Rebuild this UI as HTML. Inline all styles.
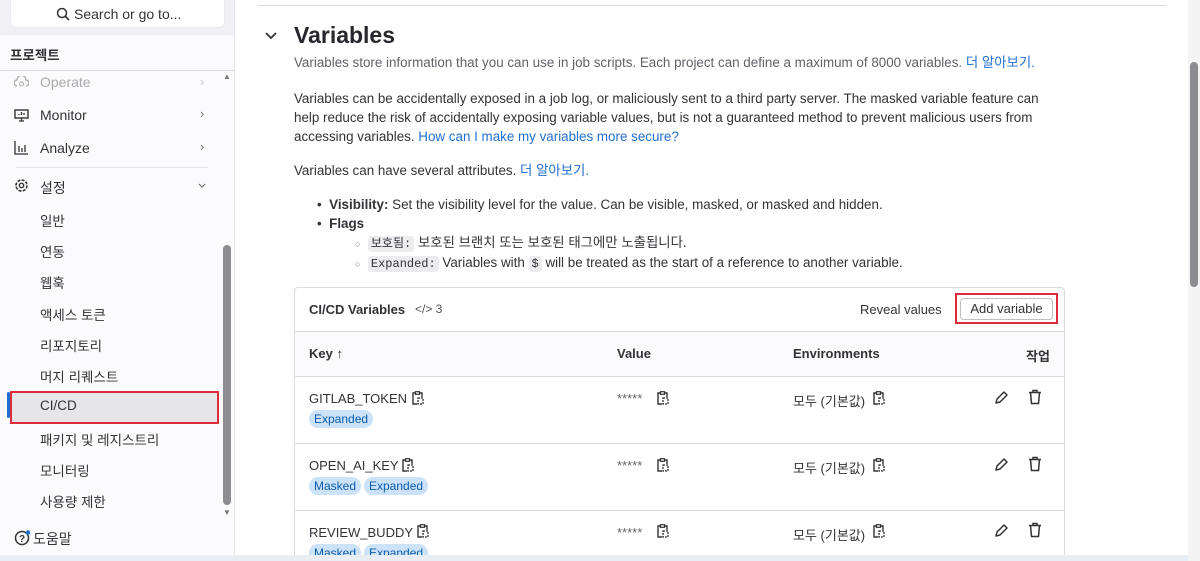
<!DOCTYPE html><html style="overflow:hidden"><head><meta charset="utf-8"><style>
*{box-sizing:border-box;margin:0;padding:0}
html,body{width:1200px;height:561px;overflow:hidden}
body{background:#fff;font-family:"Liberation Sans","Noto Sans CJK KR",sans-serif;color:#333238;font-size:14px;position:relative}
.sb{position:absolute;left:0;top:0;width:235px;height:561px;background:#fbfafd;border-right:1px solid #e4e3e8}
.abs{position:absolute;white-space:nowrap}
.it{position:absolute;left:40px;font-size:14px;color:#333238}
.sub{position:absolute;left:40px;font-size:13.5px;color:#333238}
.chev{position:absolute;left:200px;color:#737278;font-size:13px}
a{color:#1f6fd0;text-decoration:none}
code{background:#ececef;border-radius:3px;padding:1px 3px;font-family:"Liberation Mono","Noto Sans CJK KR",monospace;font-size:12px;color:#333238}
.p{position:absolute;left:294px;font-size:13.4px;line-height:19px;color:#333238}
.card{position:absolute;left:294px;top:287px;width:771px;height:274px;border:1px solid #dcdcde;border-bottom:none;border-radius:4px 4px 0 0;background:#fff;overflow:hidden}
.badge{position:absolute;background:#cbe2f9;color:#0b5cad;font-size:12px;border-radius:9px;padding:1px 5px;height:18px;line-height:16px}
.cell{position:absolute;font-size:13px;color:#333238;white-space:nowrap}
.row{position:absolute;left:0;width:100%;border-top:1px solid #dcdcde}
svg{position:absolute}
</style></head><body>
<div class="sb">
 <div class="abs" style="left:0;top:0;width:234px;height:35px;background:#f1f0f4"></div>
 <div class="abs" style="left:10px;top:0;width:215px;height:28px;background:#fff;border-radius:0 0 6px 6px;border:1px solid #ececef;border-top:none;font-size:14px;line-height:28px;color:#333238;padding-left:63px">Search or go to...</div>
 <svg style="left:56px;top:7px" width="14" height="14" viewBox="0 0 14 14"><circle cx="6" cy="6" r="4.5" fill="#fff" stroke="#333" stroke-width="1.5"/><path d="M9.5 9.5L13 13" stroke="#333" stroke-width="1.6"/></svg>
 <div class="abs" style="left:10px;top:44px;font-size:13.5px;font-weight:bold">프로젝트</div>
 <div class="abs" style="left:0;top:70px;width:234px;border-top:1px solid #dcdcde"></div>
 <div class="it" style="top:74px;color:#aaa">Operate</div><div class="chev" style="top:74px;color:#ccc">›</div>
 <svg style="left:14px;top:76px" width="15" height="13" viewBox="0 0 15 13"><path d="M3 10a3 3 0 0 1 0-6 4.5 4.5 0 0 1 9 0 3 3 0 0 1 0 6" fill="none" stroke="#aaa" stroke-width="1.3"/><circle cx="7.5" cy="8" r="2" fill="none" stroke="#aaa"/></svg>
 <div class="it" style="top:107px">Monitor</div><div class="chev" style="top:106px">›</div>
 <svg style="left:14px;top:109px" width="15" height="13" viewBox="0 0 15 13"><rect x="1" y="1" width="13" height="8" fill="none" stroke="#333" stroke-width="1.4"/><path d="M5 12h5M7.5 9v3M5 6V5M7.5 6V3M10 6V4" stroke="#333" stroke-width="1.3"/></svg>
 <div class="it" style="top:140px">Analyze</div><div class="chev" style="top:139px">›</div>
 <svg style="left:14px;top:141px" width="15" height="14" viewBox="0 0 15 14"><path d="M1 0v13h13M5 11V5M8 11V7M11 11V4" stroke="#333" stroke-width="1.3" fill="none"/></svg>
 <div class="abs" style="left:16px;top:167px;width:192px;border-top:1px solid #e4e3e8"></div>
 <div class="it" style="top:178px">설정</div>
 <svg style="left:197px;top:182px" width="10" height="8" viewBox="0 0 10 8"><path d="M2 2l3 3 3-3" fill="none" stroke="#737278" stroke-width="1.2"/></svg>
 <svg style="left:14px;top:178px" width="15" height="15" viewBox="0 0 15 15"><circle cx="7.5" cy="7.5" r="5.5" fill="none" stroke="#333" stroke-width="1.6" stroke-dasharray="3 1.3"/><circle cx="7.5" cy="7.5" r="2.2" fill="none" stroke="#333" stroke-width="1.4"/></svg>
 <div class="sub" style="top:210px">일반</div>
 <div class="sub" style="top:241px">연동</div>
 <div class="sub" style="top:272px">웹훅</div>
 <div class="sub" style="top:304px">액세스 토큰</div>
 <div class="sub" style="top:335px">리포지토리</div>
 <div class="sub" style="top:366px">머지 리퀘스트</div>
 <div class="abs" style="left:7px;top:392px;width:3px;height:26px;background:#1f6fd0;border-radius:2px"></div>
 <div class="abs" style="left:10px;top:391px;width:209px;height:33px;background:#e6e5ea;border:2px solid #dd2b3b"></div>
 <div class="sub" style="top:398px">CI/CD</div>
 <div class="sub" style="top:429px">패키지 및 레지스트리</div>
 <div class="sub" style="top:460px">모니터링</div>
 <div class="sub" style="top:491px">사용량 제한</div>
 <div class="abs" style="left:223px;top:245px;width:8px;height:260px;background:#8d8c91;border-radius:4px"></div>
 <div class="abs" style="left:223px;top:72px;font-size:8px;color:#777">▲</div>
 <div class="abs" style="left:223px;top:508px;font-size:8px;color:#777">▼</div>
 <svg style="left:14px;top:530px" width="16" height="16" viewBox="0 0 16 16"><circle cx="8" cy="8" r="6.5" fill="none" stroke="#333" stroke-width="1.5"/><text x="8" y="12" font-size="10" text-anchor="middle" font-family="Liberation Sans" font-weight="bold" fill="#333">?</text><circle cx="14" cy="2.5" r="2.3" fill="#1f75cb"/></svg>
 <div class="abs" style="left:33px;top:529px;font-size:14px">도움말</div>
</div>
<div class="abs" style="left:258px;top:5px;width:908px;border-top:1px solid #dcdcde"></div>
<div class="abs" style="left:1188px;top:0;width:12px;height:561px;background:#f4f4f4"></div>
<div class="abs" style="left:1190px;top:62px;width:8px;height:225px;background:#8d8c91;border-radius:4px"></div>
<svg style="left:264px;top:30px" width="14" height="12" viewBox="0 0 14 12"><path d="M2 3l5 5 5-5" fill="none" stroke="#333" stroke-width="1.8"/></svg>
<div class="abs" style="left:294px;top:22px;font-size:23px;font-weight:bold;color:#28272d">Variables</div>
<div class="p" style="top:53px;color:#626168">Variables store information that you can use in job scripts. Each project can define a maximum of 8000 variables. <a>더 알아보기.</a></div>
<div class="p" style="top:89px;width:766px">Variables can be accidentally exposed in a job log, or maliciously sent to a third party server. The masked variable feature can help reduce the risk of accidentally exposing variable values, but is not a guaranteed method to prevent malicious users from accessing variables. <a>How can I make my variables more secure?</a></div>
<div class="p" style="top:161px">Variables can have several attributes. <a>더 알아보기.</a></div>
<div class="p" style="top:195px;left:317px">•&nbsp;&nbsp;<b>Visibility:</b> Set the visibility level for the value. Can be visible, masked, or masked and hidden.</div>
<div class="p" style="top:214px;left:317px">•&nbsp;&nbsp;<b>Flags</b></div>
<div class="p" style="top:233px;left:355px"><span style="font-size:9px;color:#777">○</span>&nbsp; <code>보호됨:</code> 보호된 브랜치 또는 보호된 태그에만 노출됩니다.</div>
<div class="p" style="top:253px;left:355px"><span style="font-size:9px;color:#777">○</span>&nbsp; <code>Expanded:</code> Variables with <code>$</code> will be treated as the start of a reference to another variable.</div>
<div class="card">
 <div class="cell" style="left:14px;top:14px;font-weight:bold">CI/CD Variables</div>
 <div class="cell" style="left:120px;top:14px;font-size:12px;color:#535158">&lt;/&gt; 3</div>
 <div class="cell" style="left:565px;top:14px">Reveal values</div>
 <div class="abs" style="left:660px;top:5px;width:103px;height:31px;border:2px solid #dd2b3b"></div>
 <div class="abs" style="left:665px;top:10px;width:93px;height:22px;border:1px solid #bfbfc3;border-radius:4px;font-size:13px;text-align:center;line-height:20px">Add variable</div>
 <div class="row" style="top:43px;height:45px;background:#fbfafd"></div>
 <div class="cell" style="left:14px;top:58px;font-weight:bold">Key ↑</div>
 <div class="cell" style="left:322px;top:58px;font-weight:bold">Value</div>
 <div class="cell" style="left:498px;top:58px;font-weight:bold">Environments</div>
 <div class="cell" style="left:731px;top:58px;font-weight:bold">작업</div>
 <div class="row" style="top:88px"></div>
 <div class="row" style="top:155px"></div>
 <div class="row" style="top:222px"></div>
 <div class="cell" style="left:14px;top:103px">GITLAB_TOKEN</div>
 <div class="badge" style="left:14px;top:122px">Expanded</div>
 <div class="cell" style="left:14px;top:170px">OPEN_AI_KEY</div>
 <div class="badge" style="left:14px;top:189px">Masked</div><div class="badge" style="left:69px;top:189px">Expanded</div>
 <div class="cell" style="left:14px;top:237px">REVIEW_BUDDY</div>
 <div class="badge" style="left:14px;top:256px">Masked</div><div class="badge" style="left:69px;top:256px">Expanded</div>
 <div class="cell" style="left:322px;top:103px;color:#666">*****</div>
 <div class="cell" style="left:322px;top:170px;color:#666">*****</div>
 <div class="cell" style="left:322px;top:237px;color:#666">*****</div>
 <div class="cell" style="left:498px;top:103px">모두 (기본값)</div>
 <div class="cell" style="left:498px;top:170px">모두 (기본값)</div>
 <div class="cell" style="left:498px;top:237px">모두 (기본값)</div>
</div>
<svg style="left:412px;top:391px" width="12" height="14" viewBox="0 0 12 14"><path d="M3 2H1v11h4M8 2h2v4" fill="none" stroke="#333" stroke-width="1.4"/><rect x="3.5" y="0.7" width="4" height="2.6" fill="none" stroke="#333" stroke-width="1.2"/><rect x="6" y="7" width="5" height="6" fill="none" stroke="#333" stroke-width="1.3" stroke-dasharray="2 1"/></svg>
<svg style="left:657px;top:391px" width="12" height="14" viewBox="0 0 12 14"><path d="M3 2H1v11h4M8 2h2v4" fill="none" stroke="#333" stroke-width="1.4"/><rect x="3.5" y="0.7" width="4" height="2.6" fill="none" stroke="#333" stroke-width="1.2"/><rect x="6" y="7" width="5" height="6" fill="none" stroke="#333" stroke-width="1.3" stroke-dasharray="2 1"/></svg>
<svg style="left:873px;top:391px" width="12" height="14" viewBox="0 0 12 14"><path d="M3 2H1v11h4M8 2h2v4" fill="none" stroke="#333" stroke-width="1.4"/><rect x="3.5" y="0.7" width="4" height="2.6" fill="none" stroke="#333" stroke-width="1.2"/><rect x="6" y="7" width="5" height="6" fill="none" stroke="#333" stroke-width="1.3" stroke-dasharray="2 1"/></svg>
<svg style="left:402px;top:458px" width="12" height="14" viewBox="0 0 12 14"><path d="M3 2H1v11h4M8 2h2v4" fill="none" stroke="#333" stroke-width="1.4"/><rect x="3.5" y="0.7" width="4" height="2.6" fill="none" stroke="#333" stroke-width="1.2"/><rect x="6" y="7" width="5" height="6" fill="none" stroke="#333" stroke-width="1.3" stroke-dasharray="2 1"/></svg>
<svg style="left:657px;top:458px" width="12" height="14" viewBox="0 0 12 14"><path d="M3 2H1v11h4M8 2h2v4" fill="none" stroke="#333" stroke-width="1.4"/><rect x="3.5" y="0.7" width="4" height="2.6" fill="none" stroke="#333" stroke-width="1.2"/><rect x="6" y="7" width="5" height="6" fill="none" stroke="#333" stroke-width="1.3" stroke-dasharray="2 1"/></svg>
<svg style="left:873px;top:458px" width="12" height="14" viewBox="0 0 12 14"><path d="M3 2H1v11h4M8 2h2v4" fill="none" stroke="#333" stroke-width="1.4"/><rect x="3.5" y="0.7" width="4" height="2.6" fill="none" stroke="#333" stroke-width="1.2"/><rect x="6" y="7" width="5" height="6" fill="none" stroke="#333" stroke-width="1.3" stroke-dasharray="2 1"/></svg>
<svg style="left:417px;top:524px" width="12" height="14" viewBox="0 0 12 14"><path d="M3 2H1v11h4M8 2h2v4" fill="none" stroke="#333" stroke-width="1.4"/><rect x="3.5" y="0.7" width="4" height="2.6" fill="none" stroke="#333" stroke-width="1.2"/><rect x="6" y="7" width="5" height="6" fill="none" stroke="#333" stroke-width="1.3" stroke-dasharray="2 1"/></svg>
<svg style="left:657px;top:524px" width="12" height="14" viewBox="0 0 12 14"><path d="M3 2H1v11h4M8 2h2v4" fill="none" stroke="#333" stroke-width="1.4"/><rect x="3.5" y="0.7" width="4" height="2.6" fill="none" stroke="#333" stroke-width="1.2"/><rect x="6" y="7" width="5" height="6" fill="none" stroke="#333" stroke-width="1.3" stroke-dasharray="2 1"/></svg>
<svg style="left:873px;top:524px" width="12" height="14" viewBox="0 0 12 14"><path d="M3 2H1v11h4M8 2h2v4" fill="none" stroke="#333" stroke-width="1.4"/><rect x="3.5" y="0.7" width="4" height="2.6" fill="none" stroke="#333" stroke-width="1.2"/><rect x="6" y="7" width="5" height="6" fill="none" stroke="#333" stroke-width="1.3" stroke-dasharray="2 1"/></svg>
<svg style="left:994px;top:390px" width="15" height="15" viewBox="0 0 15 15"><path d="M2 13l1-4 7-7 3 3-7 7z" fill="none" stroke="#333" stroke-width="1.5" stroke-linejoin="round"/></svg>
<svg style="left:1028px;top:389px" width="14" height="16" viewBox="0 0 14 16"><path d="M1 3.5h12M5 3.5V1.5h4v2M2.5 3.5l1 11h7l1-11" fill="none" stroke="#333" stroke-width="1.5"/></svg>
<svg style="left:994px;top:457px" width="15" height="15" viewBox="0 0 15 15"><path d="M2 13l1-4 7-7 3 3-7 7z" fill="none" stroke="#333" stroke-width="1.5" stroke-linejoin="round"/></svg>
<svg style="left:1028px;top:456px" width="14" height="16" viewBox="0 0 14 16"><path d="M1 3.5h12M5 3.5V1.5h4v2M2.5 3.5l1 11h7l1-11" fill="none" stroke="#333" stroke-width="1.5"/></svg>
<svg style="left:994px;top:523px" width="15" height="15" viewBox="0 0 15 15"><path d="M2 13l1-4 7-7 3 3-7 7z" fill="none" stroke="#333" stroke-width="1.5" stroke-linejoin="round"/></svg>
<svg style="left:1028px;top:522px" width="14" height="16" viewBox="0 0 14 16"><path d="M1 3.5h12M5 3.5V1.5h4v2M2.5 3.5l1 11h7l1-11" fill="none" stroke="#333" stroke-width="1.5"/></svg>
<div class="abs" style="left:0;top:555px;width:1188px;height:6px;background:#e9eef4"></div>
</body></html>
